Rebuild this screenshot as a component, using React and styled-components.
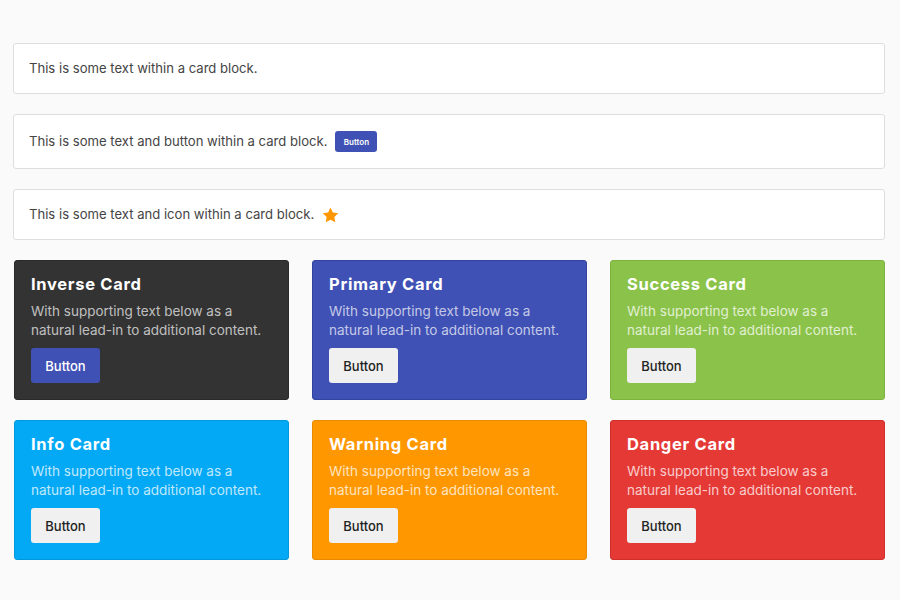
import React from "react";
import styled, { createGlobalStyle } from "styled-components";

const Global = createGlobalStyle`
  html, body { margin: 0; padding: 0; background: #fafafa; }
  body { font-family: Inter, "Open Sans", sans-serif; -webkit-font-smoothing: antialiased; }
  * { box-sizing: border-box; }
`;

const Page = styled.div`
  padding: 43px 15px 30px 13px;
  display: flex;
  flex-direction: column;
  gap: 20px;
`;

const Card = styled.div`
  background: #fff;
  border: 1px solid #dedede;
  border-radius: 3px;
  padding: ${(p) => p.$pad || "15px 15px"};
  display: flex;
  align-items: center;
  gap: 8px;
  font-size: 13.1px;
  line-height: 19px;
  color: #444;
`;

const SmallButton = styled.button`
  border: none;
  background: #3f51b5;
  color: #fff;
  font-family: inherit;
  font-size: 8px;
  font-weight: 600;
  height: 21px;
  width: 42px;
  padding: 0;
  border-radius: 3px;
`;

const Grid = styled.div`
  display: grid;
  grid-template-columns: repeat(3, 1fr);
  column-gap: 23px;
  row-gap: 20px;
  padding-left: 1px;
`;

const ColorCard = styled.div`
  background: ${(p) => p.$bg};
  border: 1px solid ${(p) => p.$border};
  border-radius: 3px;
  padding: 12px 16px 16px;
  display: flex;
  flex-direction: column;
  align-items: flex-start;
`;

const Title = styled.h3`
  margin: 0 0 7px;
  font-size: 16.5px;
  line-height: 22px;
  font-weight: 700;
  letter-spacing: 0.7px;
  color: #fff;
`;

const Text = styled.p`
  margin: 0 0 8px;
  font-size: 13.5px;
  line-height: 19px;
  color: rgba(255, 255, 255, ${(p) => p.$alpha});
`;

const CardButton = styled.button`
  border: none;
  border-radius: 3px;
  background: ${(p) => (p.$primary ? "#3f51b5" : "#f0f0f0")};
  color: ${(p) => (p.$primary ? "#fff" : "#222")};
  font-family: inherit;
  font-size: 13px;
  font-weight: 500;
  height: 35px;
  width: 69px;
`;

const Star = () => (
  <svg width="17" height="16" viewBox="0 0 24 23" aria-hidden="true">
    <path
      d="M12 0.8l3.4 7.1 7.8 1-5.7 5.4 1.4 7.7L12 18.3 5.1 22l1.4-7.7L0.8 8.9l7.8-1z"
      fill="#ff9800"
    />
  </svg>
);

const cards = [
  { title: "Inverse Card", bg: "#333333", border: "#2a2a2a", alpha: 0.7, primary: true },
  { title: "Primary Card", bg: "#3f51b5", border: "#33449e", alpha: 0.7 },
  { title: "Success Card", bg: "#8bc34a", border: "#7cb33e", alpha: 0.75 },
  { title: "Info Card", bg: "#03a9f4", border: "#0398dc", alpha: 0.75 },
  { title: "Warning Card", bg: "#ff9800", border: "#e88a00", alpha: 0.75 },
  { title: "Danger Card", bg: "#e53935", border: "#cf2e2a", alpha: 0.75 },
];

export default function App() {
  return (
    <>
      <Global />
      <Page>
        <Card>This is some text within a card block.</Card>
        <Card $pad="16px 15px 16px">
          This is some text and button within a card block.
          <SmallButton>Button</SmallButton>
        </Card>
        <Card $pad="15px 15px 15px">
          This is some text and icon within a card block.
          <Star />
        </Card>
        <Grid>
          {cards.map((c) => (
            <ColorCard key={c.title} $bg={c.bg} $border={c.border}>
              <Title>{c.title}</Title>
              <Text $alpha={c.alpha}>
                With supporting text below as a<br />
                natural lead-in to additional content.
              </Text>
              <CardButton $primary={c.primary}>Button</CardButton>
            </ColorCard>
          ))}
        </Grid>
      </Page>
    </>
  );
}
